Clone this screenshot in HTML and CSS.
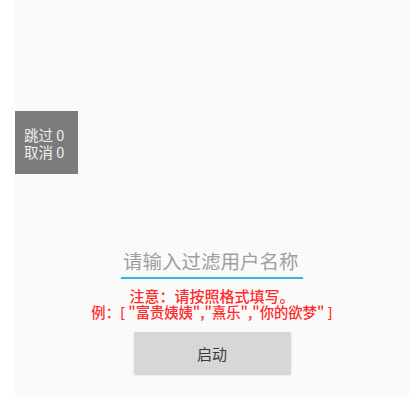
FILE: index.html
```html
<!DOCTYPE html>
<html lang="zh">
<head>
<meta charset="utf-8">
<link rel="stylesheet" href="styles.css">
</head>
<body>
<div class="screen">
  <div class="counter">
    <div>跳过 0</div>
    <div>取消 0</div>
  </div>
  <div class="form">
    <input class="filter" type="text" placeholder="请输入过滤用户名称">
    <div class="note">
      <div class="note-title">注意：请按照格式填写。</div>
      <div class="note-example">例：[ "富贵姨姨","熹乐","你的欲梦" ]</div>
    </div>
    <button class="start">启动</button>
  </div>
</div>
</body>
</html>
```
FILE: styles.css
```css
html, body {
  margin: 0;
  padding: 0;
  background: #ffffff;
}
body {
  font-family: "Noto Sans CJK SC", "Noto Sans", sans-serif;
}
.screen {
  margin-left: 15px;
  width: 394px;
  height: 396px;
  background: #fafafa;
  display: flex;
  flex-direction: column;
  padding-top: 111px;
  box-sizing: border-box;
}
.counter {
  width: 63px;
  height: 63px;
  background: #7b7b7b;
  color: #eeeeee;
  font-size: 14.5px;
  line-height: 17px;
  padding: 15px 0 0 9px;
  box-sizing: border-box;
}
.form {
  margin-top: 74px;
  display: flex;
  flex-direction: column;
  align-items: center;
}
.filter {
  width: 180px;
  border: none;
  border-bottom: 2px solid #33b5e5;
  background: transparent;
  font-family: inherit;
  font-size: 19.5px;
  line-height: 26px;
  height: 26px;
  padding: 0 0 3px 2px;
  margin: 0;
  outline: none;
  box-sizing: content-box;
}
.filter::placeholder {
  color: #a0a0a0;
}
.note {
  margin-top: 9px;
  color: #ff2a2a;
  font-weight: 500;
  line-height: 16px;
  text-align: center;
  white-space: nowrap;
}
.note-title {
  font-size: 15px;
}
.note-example {
  font-size: 14.3px;
}
.start {
  margin-top: 12px;
  width: 157px;
  height: 42px;
  border: none;
  border-radius: 2px;
  background: #d6d7d7;
  color: #3a3a3a;
  font-family: inherit;
  font-size: 15px;
  box-shadow: 0 1px 2px rgba(0,0,0,0.2);
}
```
